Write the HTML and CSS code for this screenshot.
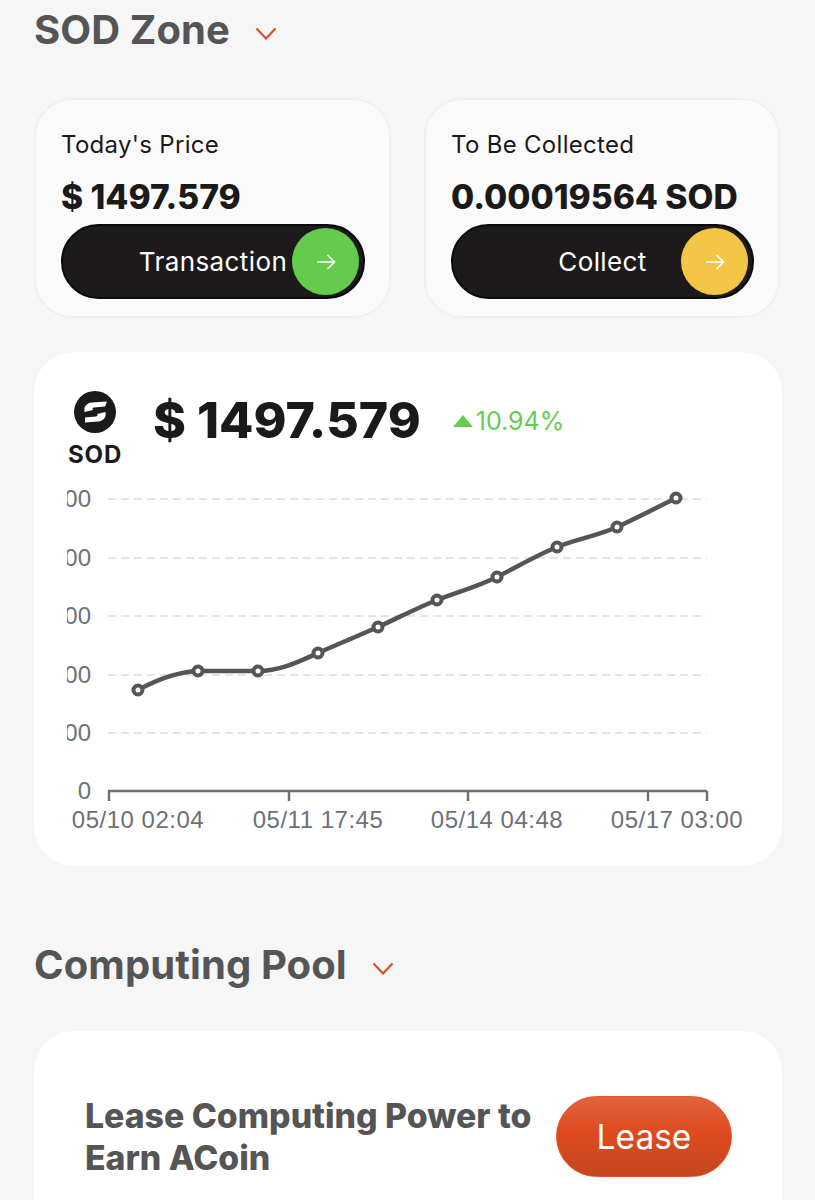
FILE: index.html
```html
<!DOCTYPE html>
<html lang="en">
<head>
<meta charset="utf-8">
<title>SOD Zone</title>
<link rel="stylesheet" href="styles.css">
</head>
<body>
<main class="page">
  <header class="section-head">
    <h2 class="section-title">SOD Zone</h2>
    <svg class="chev" viewBox="0 0 22 13"><path d="M1.5 1.5 11 11.5 20.5 1.5"/></svg>
  </header>
  <section class="stat-grid">
    <article class="stat-card">
      <p class="stat-label">Today's Price</p>
      <p class="stat-value">$ 1497.579</p>
      <div class="pill">
        <span class="pill-text">Transaction</span>
        <span class="pill-knob knob-green"><svg class="arrow" viewBox="0 0 20 16"><path d="M1 8H18.5M11.5 1 18.5 8 11.5 15"/></svg></span>
      </div>
    </article>
    <article class="stat-card">
      <p class="stat-label">To Be Collected</p>
      <p class="stat-value">0.00019564 SOD</p>
      <div class="pill">
        <span class="pill-text">Collect</span>
        <span class="pill-knob knob-yellow"><svg class="arrow" viewBox="0 0 20 16"><path d="M1 8H18.5M11.5 1 18.5 8 11.5 15"/></svg></span>
      </div>
    </article>
  </section>
  <section class="chart-card">
    <div class="chart-head">
      <div class="coin">
        <svg class="coin-logo" viewBox="0 0 42 42">
          <circle cx="21" cy="21" r="21" fill="#1b191a"/>
          <path fill="#fff" d="M10.5 21C9.5 15 13 12 18 11.5L33 10.5 31 15.5 20 16.5C18.5 16.7 18 18 19 19L10.5 21ZM31.5 21C32.5 27 29 30 24 30.5L11 31.5 11 26.5 22 25.5C23.5 25.3 24 24 23 23L31.5 21Z"/>
        </svg>
        <span class="coin-name">SOD</span>
      </div>
      <span class="chart-price">$ 1497.579</span>
      <span class="chart-change"><svg class="up" viewBox="0 0 20 12"><path d="M10 0 20 12H0Z"/></svg>10.94%</span>
    </div>
    <svg class="chart" viewBox="67 480 679 360">
      <g class="grid">
        <path d="M108 499H707M108 558H707M108 616H707M108 675H707M108 733H707"/>
      </g>
      <g class="y-labels">
        <text x="91" y="507">1000</text>
        <text x="91" y="566">800</text>
        <text x="91" y="624">600</text>
        <text x="91" y="683">400</text>
        <text x="91" y="741">200</text>
        <text x="91" y="799">0</text>
      </g>
      <path class="axis" d="M108 791H707M109 791V801M289 791V801M468 791V801M648 791V801M707 791V801"/>
      <g class="x-labels">
        <text x="138" y="828">05/10 02:04</text>
        <text x="318" y="828">05/11 17:45</text>
        <text x="497" y="828">05/14 04:48</text>
        <text x="677" y="828">05/17 03:00</text>
      </g>
      <path class="line" d="M138 690C158 679 178 672 198 671C218 671 238 671 258 671C280 671 298 662 318 653C338 644 358 636 378 627C398 618 417 608 437 600C457 592 477 587 497 577C517 567 537 555 557 547C577 539 597 536 617 527C637 518 656 508 676 498"/>
      <g class="dots">
        <circle cx="138" cy="690" r="4.5"/>
        <circle cx="198" cy="671" r="4.5"/>
        <circle cx="258" cy="671" r="4.5"/>
        <circle cx="318" cy="653" r="4.5"/>
        <circle cx="378" cy="627" r="4.5"/>
        <circle cx="437" cy="600" r="4.5"/>
        <circle cx="497" cy="577" r="4.5"/>
        <circle cx="557" cy="547" r="4.5"/>
        <circle cx="617" cy="527" r="4.5"/>
        <circle cx="676" cy="498" r="4.5"/>
      </g>
    </svg>
  </section>
  <header class="section-head pool-head">
    <h2 class="section-title">Computing Pool</h2>
    <svg class="chev" viewBox="0 0 22 13"><path d="M1.5 1.5 11 11.5 20.5 1.5"/></svg>
  </header>
  <section class="lease-card">
    <h3 class="lease-text">Lease Computing Power to Earn ACoin</h3>
    <span class="lease-btn">Lease</span>
  </section>
</main>
</body>
</html>
```
FILE: styles.css
```css
* { box-sizing: border-box; }
html, body { margin: 0; height: 100%; }
body {
  background: #f6f6f6;
  font-family: Inter, "Liberation Sans", sans-serif;
  overflow: hidden;
}
.page { padding: 0 33px 0 34px; height: 1200px; overflow: hidden; }
.section-head { display: flex; align-items: center; height: 60px; gap: 25px; }
.section-title { margin: 0; font-size: 40px; line-height: 60px; font-weight: 700; color: #555; letter-spacing: 0.1px; }
.chev { width: 22px; height: 13px; margin-top: 6px; flex: none; }
.chev path { fill: none; stroke: #dd4f2a; stroke-width: 2.2; }
.stat-grid { display: grid; grid-template-columns: 357px 356px; gap: 33px; margin-top: 38px; }
.stat-card {
  height: 220px;
  background: #fafafa;
  border: 2px solid #f0f0f0;
  border-radius: 38px;
  padding: 28px 24px 0 25px;
}
.stat-label { margin: 0; font-size: 24px; line-height: 34px; color: #1b191a; letter-spacing: 0.3px; }
.stat-value { margin: 15px 0 0; font-size: 33.6px; line-height: 40px; font-weight: 800; color: #1b191a; }
.pill {
  position: relative;
  display: flex;
  align-items: center;
  justify-content: center;
  height: 75px;
  margin-top: 7px;
  background: #1c1a1b;
  border: 2px solid #0b0a0a;
  border-radius: 38px;
}
.pill-text { color: #fff; font-size: 26px; letter-spacing: 0.4px; }
.pill-knob {
  position: absolute;
  right: 4px;
  top: 2px;
  width: 67px;
  height: 67px;
  border-radius: 50%;
  display: flex;
  align-items: center;
  justify-content: center;
}
.knob-green { background: #64cb4f; }
.knob-yellow { background: #f4c645; }
.arrow { width: 20px; height: 16px; }
.arrow path { fill: none; stroke: #fff; stroke-width: 1.7; }
.chart-card {
  height: 514px;
  margin-top: 34px;
  background: #fff;
  border-radius: 40px;
}
.chart-head { display: flex; align-items: flex-start; height: 128px; padding-top: 39px; }
.coin { width: 54px; margin-left: 34px; display: flex; flex-direction: column; align-items: center; }
.coin-logo { width: 42px; height: 42px; display: block; }
.coin-name { font-size: 24px; line-height: 28px; font-weight: 700; color: #1b191a; margin-top: 8px; letter-spacing: 0.9px; }
.chart-price { font-size: 50px; line-height: 58px; font-weight: 800; color: #1b191a; margin-left: 31px; }
.chart-change { display: flex; align-items: center; gap: 3px; font-size: 25px; line-height: 60px; color: #66cc52; margin-left: 32px; }
.up { width: 20px; height: 12px; fill: #66cc52; }
.chart { display: block; width: 679px; height: 360px; margin-left: 33px; }
.grid path { fill: none; stroke: #e3e4ef; stroke-width: 2; stroke-dasharray: 8 5; }
.y-labels text { font: 24px "Liberation Sans", sans-serif; fill: #6e7079; text-anchor: end; }
.x-labels text { font: 24px "Liberation Sans", sans-serif; fill: #6e7079; text-anchor: middle; letter-spacing: 0.5px; }
.axis { fill: none; stroke: #6e7079; stroke-width: 2.5; }
.line { fill: none; stroke: #555; stroke-width: 4.5; }
.dots circle { fill: #fff; stroke: #555; stroke-width: 4; }
.pool-head { margin-top: 69px; }
.lease-card {
  display: flex;
  align-items: flex-start;
  justify-content: space-between;
  height: 300px;
  margin-top: 36px;
  padding: 65px 50px 0 51px;
  background: #fff;
  border-radius: 40px 40px 0 0;
}
.lease-text { margin: -1px 0 0; width: 460px; font-size: 33.8px; line-height: 42px; font-weight: 800; color: #555; }
.lease-btn {
  flex: none;
  width: 176px;
  height: 81px;
  border-radius: 41px;
  display: flex;
  align-items: center;
  justify-content: center;
  color: #fff;
  font-size: 33.5px;
  background: linear-gradient(#e0643c, #de4a1f 45%, #c44720);
  border: 1px solid #e4552c;
}
```
